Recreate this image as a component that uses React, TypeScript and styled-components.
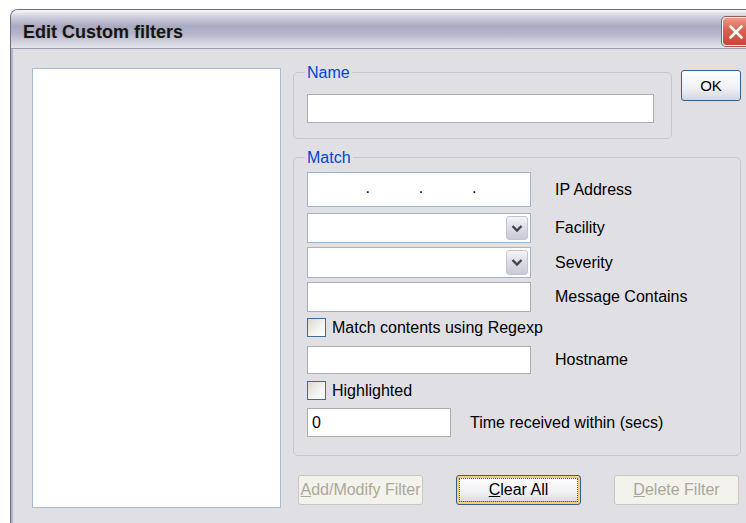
import React from 'react';
import styled, { createGlobalStyle } from 'styled-components';

const GlobalStyle = createGlobalStyle`
  html, body {
    margin: 0;
    padding: 0;
    background: #fff;
    overflow: hidden;
  }
  body {
    font-family: "Liberation Sans", Arial, sans-serif;
    font-size: 16px;
    color: #000;
  }
`;

const Window = styled.div`
  margin: 9px 0 0 10px;
  width: 743px;
  height: 530px;
  display: flex;
  flex-direction: column;
  border: 1px solid #6c6c84;
  border-bottom: none;
  border-radius: 8px 8px 0 0;
  overflow: hidden;
  background: #e0dfe4;
`;

const TitleBar = styled.div`
  height: 39px;
  flex-shrink: 0;
  display: flex;
  align-items: center;
  justify-content: space-between;
  padding: 5px 4px 0 12px;
  box-sizing: border-box;
  border-bottom: 1px solid #9a9ab0;
  background: linear-gradient(
    to bottom,
    #f6f6fa 0%,
    #d0d0de 18%,
    #aaaac3 42%,
    #b4b4ca 62%,
    #d6d6e2 88%,
    #e4e4ec 100%
  );
`;

const Title = styled.span`
  font-weight: 700;
  font-size: 18px;
  margin-top: 2px;
  color: #151515;
  text-shadow: 0 0 2px rgba(140, 120, 80, 0.35);
`;

const CloseButton = styled.div`
  width: 28px;
  height: 29px;
  box-sizing: border-box;
  border: 1px solid #f4f4f8;
  box-shadow: 0 0 0 1px #9a5a58;
  border-radius: 4px;
  background: linear-gradient(to bottom, #ec9a88 0%, #d9604e 45%, #c8473a 100%);
  display: flex;
  align-items: center;
  justify-content: center;
`;

const Content = styled.div`
  flex: 1;
  display: flex;
  align-items: flex-start;
  padding: 13px 0 0 19px;
  border-left: 2px solid #b4b4c8;
`;

const FilterList = styled.div`
  width: 249px;
  height: 440px;
  margin-top: 6px;
  flex-shrink: 0;
  box-sizing: border-box;
  border: 1px solid #a7bad3;
  background: #fff;
`;

const RightColumn = styled.div`
  width: 448px;
  margin-left: 12px;
  flex-shrink: 0;
  display: flex;
  flex-direction: column;
`;

const TopRow = styled.div`
  display: flex;
  align-items: flex-start;
`;

const Group = styled.fieldset<{ $width: number; $bottom: number; $top?: number }>`
  width: ${p => p.$width}px;
  margin: ${p => p.$top ?? 0}px 0 0 0;
  min-width: 0;
  box-sizing: border-box;
  padding: 0 13px ${p => p.$bottom}px 13px;
  border: 1px solid #c8c5cc;
  border-radius: 5px;
`;

const Legend = styled.legend`
  padding: 0 2px;
  margin-left: -2px;
  line-height: 21px;
  color: #0046d5;
`;

const TextBox = styled.div<{ $width: number; $height: number; $tint?: boolean }>`
  width: ${p => p.$width}px;
  height: ${p => p.$height}px;
  flex-shrink: 0;
  box-sizing: border-box;
  border: 1px solid ${p => (p.$tint ? '#9fb4cd' : '#a9aeb6')};
  background: #fff;
  display: flex;
  align-items: center;
  padding-left: 4px;
`;

const IpBox = styled(TextBox)`
  justify-content: space-around;
  padding: 0 29px 4px 33px;
  color: #000;
`;

const Combo = styled(TextBox)`
  justify-content: flex-end;
  padding: 2px;
  align-items: stretch;
`;

const ComboButton = styled.div`
  width: 22px;
  box-sizing: border-box;
  border: 1px solid #c3c4d2;
  border-radius: 3px;
  background: linear-gradient(to bottom, #f4f4f8 0%, #dcdce6 50%, #c9c9d8 100%);
  display: flex;
  align-items: center;
  justify-content: center;
`;

const Row = styled.div<{ $top: number; $height: number }>`
  display: flex;
  align-items: center;
  margin-top: ${p => p.$top}px;
  height: ${p => p.$height}px;
`;

const FieldLabel = styled.span<{ $gap?: number }>`
  margin-left: ${p => p.$gap ?? 24}px;
  white-space: nowrap;
`;

const CheckBox = styled.span`
  width: 19px;
  height: 19px;
  box-sizing: border-box;
  border: 1px solid #3f6b98;
  background: linear-gradient(135deg, #d8d8d4 0%, #f4f4f2 60%, #ffffff 100%);
  flex-shrink: 0;
`;

const CheckLabel = styled.span`
  margin-left: 6px;
  white-space: nowrap;
`;

const PushButton = styled.div<{ $width: number; $height: number }>`
  width: ${p => p.$width}px;
  height: ${p => p.$height}px;
  box-sizing: border-box;
  border: 1px solid #355f8c;
  border-radius: 3px;
  background: linear-gradient(to bottom, #ffffff 0%, #f2f2f6 55%, #d6d5e0 100%);
  display: flex;
  align-items: center;
  justify-content: center;
  position: relative;
  flex-shrink: 0;
`;

const OkButton = styled(PushButton)`
  margin: 8px 0 0 9px;
  font-size: 15px;
`;

const DefaultButton = styled(PushButton)`
  box-shadow: inset 0 0 0 2px #f6cf72, inset 0 -2px 0 1px #eaa44a;

  &::after {
    content: '';
    position: absolute;
    inset: 2px;
    border: 1px dotted #5a4a80;
  }
`;

const DisabledButton = styled(PushButton)`
  border-color: #cac8bc;
  background: #f3f2ec;
  color: #aca899;
`;

const ButtonRow = styled.div`
  margin-top: 19px;
  display: flex;
  justify-content: space-between;
  padding: 0 2px 0 5px;
`;

const Chevron = () => (
  <svg width="12" height="9" viewBox="0 0 12 9">
    <path d="M1.5 2 L6 6.5 L10.5 2" fill="none" stroke="#444" strokeWidth="2.4" />
  </svg>
);

const CloseGlyph = () => (
  <svg width="16" height="16" viewBox="0 0 16 16">
    <path d="M2.5 2.5 L13.5 13.5 M13.5 2.5 L2.5 13.5" stroke="#fff" strokeWidth="2.6" strokeLinecap="round" />
  </svg>
);

export default function App() {
  return (
    <>
      <GlobalStyle />
      <Window>
        <TitleBar>
          <Title>Edit Custom filters</Title>
          <CloseButton>
            <CloseGlyph />
          </CloseButton>
        </TitleBar>

        <Content>
          <FilterList />

          <RightColumn>
            <TopRow>
              <Group $width={379} $bottom={15}>
                <Legend>Name</Legend>
                <Row $top={11} $height={29}>
                  <TextBox $width={347} $height={29} />
                </Row>
              </Group>
              <OkButton $width={60} $height={31}>OK</OkButton>
            </TopRow>

            <Group $width={448} $bottom={18} $top={8}>
              <Legend>Match</Legend>
              <Row $top={4} $height={35}>
                <IpBox $width={224} $height={35} $tint>
                  <span>.</span>
                  <span>.</span>
                  <span>.</span>
                </IpBox>
                <FieldLabel>IP Address</FieldLabel>
              </Row>
              <Row $top={6} $height={30}>
                <Combo $width={224} $height={30} $tint>
                  <ComboButton>
                    <Chevron />
                  </ComboButton>
                </Combo>
                <FieldLabel>Facility</FieldLabel>
              </Row>
              <Row $top={4} $height={31}>
                <Combo $width={224} $height={31} $tint>
                  <ComboButton>
                    <Chevron />
                  </ComboButton>
                </Combo>
                <FieldLabel>Severity</FieldLabel>
              </Row>
              <Row $top={4} $height={30}>
                <TextBox $width={224} $height={30} />
                <FieldLabel>Message Contains</FieldLabel>
              </Row>
              <Row $top={6} $height={19}>
                <CheckBox />
                <CheckLabel>Match contents using Regexp</CheckLabel>
              </Row>
              <Row $top={9} $height={28}>
                <TextBox $width={224} $height={28} />
                <FieldLabel>Hostname</FieldLabel>
              </Row>
              <Row $top={7} $height={19}>
                <CheckBox />
                <CheckLabel>Highlighted</CheckLabel>
              </Row>
              <Row $top={8} $height={29}>
                <TextBox $width={144} $height={29}>0</TextBox>
                <FieldLabel $gap={19}>Time received within (secs)</FieldLabel>
              </Row>
            </Group>

            <ButtonRow>
              <DisabledButton $width={125} $height={30}>
                <u>A</u>dd/Modify Filter
              </DisabledButton>
              <DefaultButton $width={125} $height={30}>
                <u>C</u>lear All
              </DefaultButton>
              <DisabledButton $width={125} $height={30}>
                <u>D</u>elete Filter
              </DisabledButton>
            </ButtonRow>
          </RightColumn>
        </Content>
      </Window>
    </>
  );
}
